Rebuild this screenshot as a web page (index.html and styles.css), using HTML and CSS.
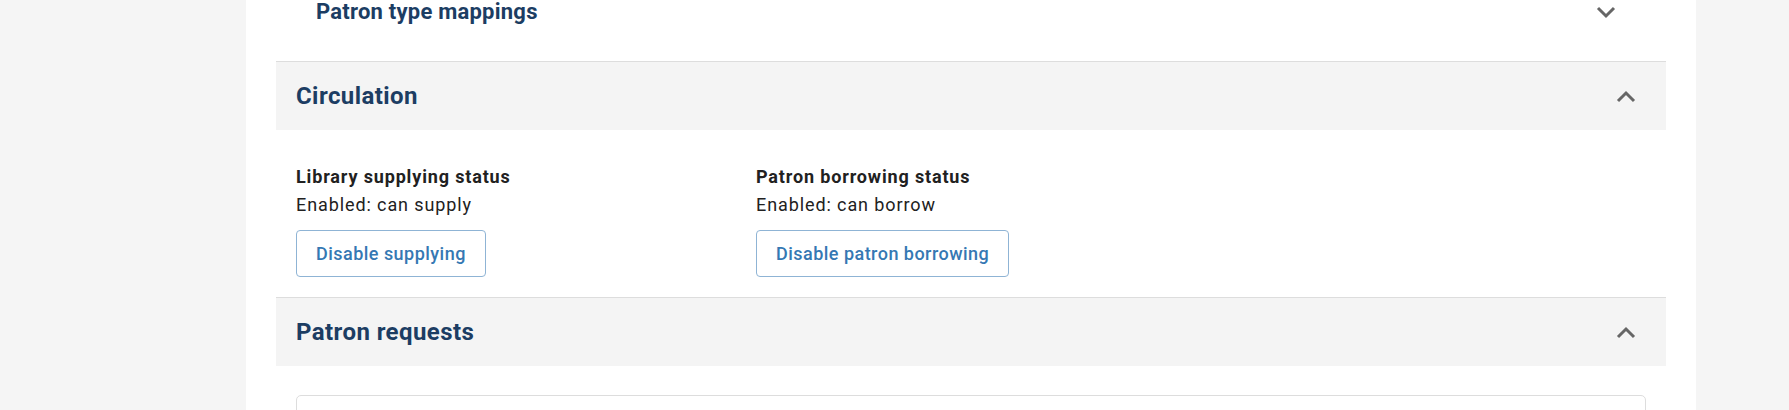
FILE: index.html
```html
<html>
    <head>
        <title>Library settings</title>
        <link rel="stylesheet" href="styles.css">
    </head>
    <body>
        <div class="page">
            <div class="prevBody">
                <div class="nestedHead">
                    <h3 class="nestedTitle">Patron type mappings</h3>
                    <svg class="chevron" width="20" height="13" viewBox="0 0 20 13"><polyline points="2,2 10,10 18,2"/></svg>
                </div>
            </div>

            <div class="section">
                <div class="sectionHead">
                    <h2 class="sectionTitle">Circulation</h2>
                    <svg class="chevron" width="20" height="13" viewBox="0 0 20 13"><polyline points="2,11 10,3 18,11"/></svg>
                </div>
                <div class="sectionBody">
                    <div class="statusGrid">
                        <div class="statusCol">
                            <div class="label">Library supplying status</div>
                            <div class="value">Enabled: can supply</div>
                            <button type="button" class="outlineBtn">Disable supplying</button>
                        </div>
                        <div class="statusCol">
                            <div class="label">Patron borrowing status</div>
                            <div class="value">Enabled: can borrow</div>
                            <button type="button" class="outlineBtn">Disable patron borrowing</button>
                        </div>
                        <div class="statusCol"></div>
                    </div>
                </div>
            </div>

            <div class="section">
                <div class="sectionHead">
                    <h2 class="sectionTitle">Patron requests</h2>
                    <svg class="chevron" width="20" height="13" viewBox="0 0 20 13"><polyline points="2,11 10,3 18,11"/></svg>
                </div>
                <div class="sectionBody open">
                    <div class="innerCard"></div>
                </div>
            </div>
        </div>
    </body>
</html>
```

FILE: styles.css
```css
body {
    margin: 0;
    background-color: #f5f5f5;
    font-family: Roboto, "Liberation Sans", sans-serif;
    color: #212121;
}
.page {
    margin-left: 246px;
    width: 1450px;
    min-height: 410px;
    box-sizing: border-box;
    padding: 0 30px;
    background-color: white;
    overflow: hidden;
}
.prevBody {
    padding: 1px 20px 0 20px;
    margin-bottom: 38px;
}
.nestedHead {
    display: flex;
    justify-content: space-between;
    align-items: center;
    height: 22px;
    padding: 0 30px 0 20px;
}
.nestedTitle {
    margin: 0;
    font-size: 22px;
    line-height: 22px;
    font-weight: bold;
    letter-spacing: 0.23px;
    color: #1c3d63;
}
.chevron {
    display: block;
}
.chevron polyline {
    fill: none;
    stroke: #666;
    stroke-width: 3;
}
.section {
    border-top: 1px solid #dddddd;
}
.sectionHead {
    display: flex;
    justify-content: space-between;
    align-items: center;
    height: 68px;
    padding: 0 30px 0 20px;
    background-color: #f4f4f4;
}
.sectionTitle {
    margin: 0;
    font-size: 24px;
    font-weight: bold;
    letter-spacing: 0.42px;
    color: #1c3d63;
}
.sectionBody {
    padding: 33px 20px 20px 20px;
}
.sectionBody.open {
    padding: 29px 20px 0 20px;
}
.statusGrid {
    display: grid;
    grid-template-columns: repeat(3, 1fr);
    column-gap: 30px;
}
.label {
    font-size: 18px;
    line-height: 28px;
    font-weight: bold;
    letter-spacing: 0.85px;
}
.value {
    font-size: 18px;
    line-height: 28px;
    letter-spacing: 0.9px;
}
.outlineBtn {
    margin-top: 11px;
    padding: 9px 19px;
    font-family: Roboto, "Liberation Sans", sans-serif;
    font-size: 18px;
    line-height: 27px;
    font-weight: 500;
    letter-spacing: 0.47px;
    color: #3578b3;
    background-color: white;
    border: 1px solid #8fb4d5;
    border-radius: 4px;
}
.innerCard {
    height: 40px;
    border: 1px solid #dddddd;
    border-radius: 5px;
}
```
